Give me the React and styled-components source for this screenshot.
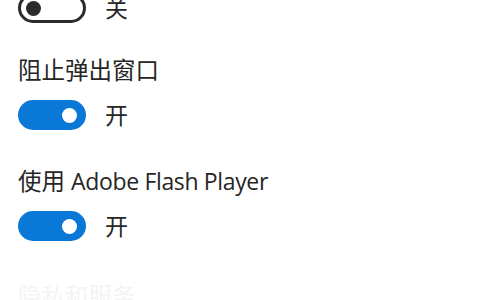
import React from "react";
import styled, { createGlobalStyle } from "styled-components";

const Global = createGlobalStyle`
  html, body { margin: 0; padding: 0; background: #ffffff; overflow: hidden; }
  body {
    font-family: "Segoe UI", "Open Sans", "Noto Sans CJK SC", sans-serif;
    color: #262626;
  }
`;

const Page = styled.div`
  width: 480px;
  height: 300px;
  overflow: hidden;
  display: flex;
  flex-direction: column;
  padding-left: 18px;
  box-sizing: border-box;
`;

const Column = styled.div`
  display: flex;
  flex-direction: column;
  margin-top: -7px;
`;

const Setting = styled.div`
  display: flex;
  flex-direction: column;
  gap: 15px;
  margin-top: ${(p) => p.$gap || 0}px;
`;

const Label = styled.div`
  font-size: 23.5px;
  line-height: 30px;
  height: 30px;
  white-space: nowrap;
  color: ${(p) => (p.$faint ? "#f4f4f4" : "#262626")};
`;

const Latin = styled.span`
  font-size: 23px;
  letter-spacing: -0.35px;
`;

const ToggleRow = styled.div`
  display: flex;
  align-items: center;
  gap: 19px;
  height: 30px;
`;

const Track = styled.div`
  width: 68px;
  height: 30px;
  box-sizing: border-box;
  border-radius: 15px;
  border: 3px solid ${(p) => (p.$on ? "#0a78d7" : "#2b2b2b")};
  background: ${(p) => (p.$on ? "#0a78d7" : "#ffffff")};
  display: flex;
  align-items: center;
  justify-content: ${(p) => (p.$on ? "flex-end" : "flex-start")};
  padding: 0 6px 0 ${(p) => (p.$on ? 6 : 5)}px;
`;

const Knob = styled.div`
  width: 15px;
  height: 15px;
  border-radius: 50%;
  background: ${(p) => (p.$on ? "#ffffff" : "#2b2b2b")};
`;

const State = styled.span`
  font-size: 23px;
  line-height: 30px;
  color: #262626;
`;

function Toggle({ on }) {
  return (
    <ToggleRow>
      <Track $on={on}>
        <Knob $on={on} />
      </Track>
      <State>{on ? "开" : "关"}</State>
    </ToggleRow>
  );
}

export default function App() {
  return (
    <>
      <Global />
      <Page>
        <Column>
          <Toggle on={false} />
          <Setting $gap={32}>
            <Label>阻止弹出窗口</Label>
            <Toggle on />
          </Setting>
          <Setting $gap={36}>
            <Label>
              使用 <Latin>Adobe Flash Player</Latin>
            </Label>
            <Toggle on />
          </Setting>
          <Setting $gap={40}>
            <Label $faint>隐私和服务</Label>
          </Setting>
        </Column>
      </Page>
    </>
  );
}
